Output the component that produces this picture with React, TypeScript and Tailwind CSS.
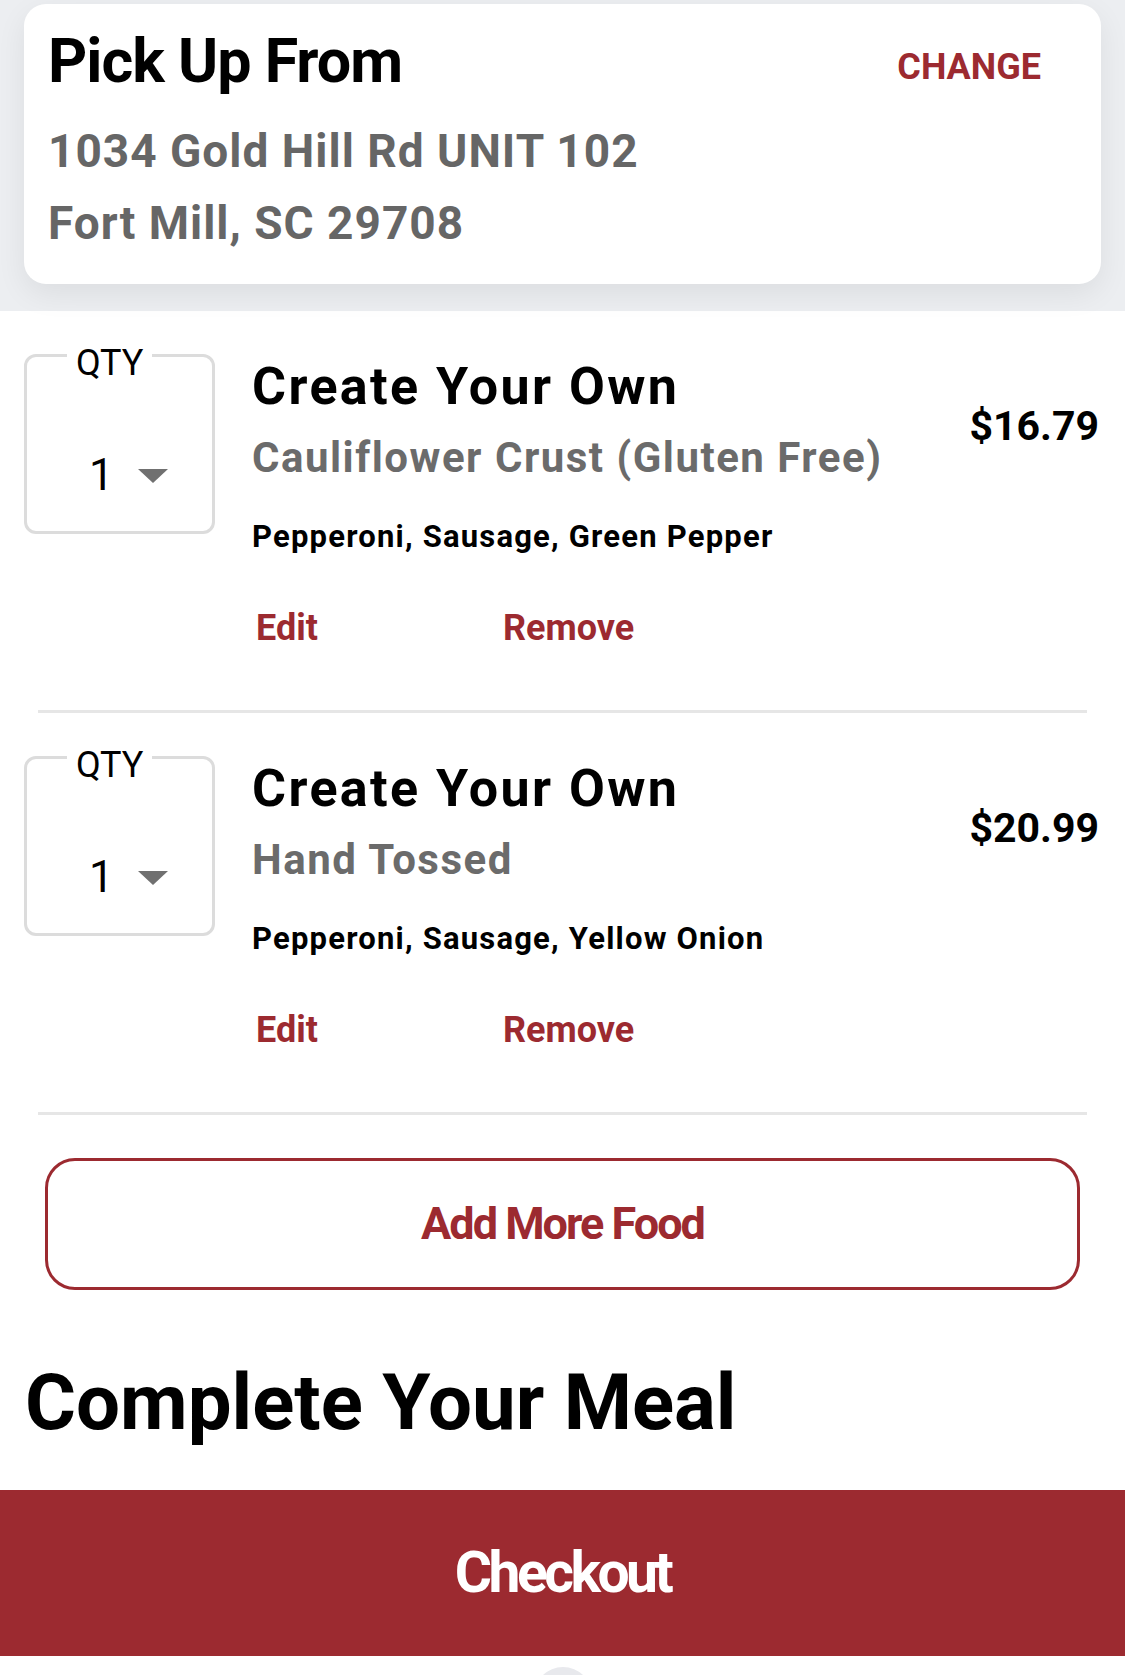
import React from 'react';

type CartItem = {
  id: number;
  name: string;
  crust: string;
  toppings: string;
  price: string;
  qty: number;
};

const CART: CartItem[] = [
  { id: 1, name: 'Create Your Own', crust: 'Cauliflower Crust (Gluten Free)', toppings: 'Pepperoni, Sausage, Green Pepper', price: '$16.79', qty: 1 },
  { id: 2, name: 'Create Your Own', crust: 'Hand Tossed', toppings: 'Pepperoni, Sausage, Yellow Onion', price: '$20.99', qty: 1 },
];

const QtyBox: React.FC<{ qty: number }> = ({ qty }) => (
  <div className="relative w-[191px] h-[180px] shrink-0 border-[3px] border-[#dcdcdc] rounded-[12px]">
    <span className="absolute top-[-12px] left-[40px] bg-white px-[9px] text-[36px] leading-none text-black">QTY</span>
    <div className="flex items-center pt-[96px] pl-[62px] gap-[24px]">
      <span className="text-[44px] leading-none text-black">{qty}</span>
      <svg width="30" height="14" viewBox="0 0 30 14" className="mt-[2px]">
        <path d="M0 0 L30 0 L15 14 Z" fill="#707070" />
      </svg>
    </div>
  </div>
);

const CartRow: React.FC<{ item: CartItem }> = ({ item }) => (
  <div>
    <div className="flex pt-[43px] pb-[64px] pl-[24px] pr-[26px]">
      <QtyBox qty={item.qty} />
      <div className="flex-1 pl-[37px] pt-[7px]">
        <h3 className="text-[52px] leading-none font-bold tracking-[2.4px] text-black">{item.name}</h3>
        <p className="mt-[24px] text-[42px] leading-none font-bold tracking-[1.5px] text-[#6b6b6b]">{item.crust}</p>
        <p className="mt-[42px] text-[31px] leading-none font-bold tracking-[1.2px] text-black">{item.toppings}</p>
        <div className="mt-[58px] flex text-[36px] leading-none font-bold text-[#9c2a30]">
          <button className="w-[251px] pl-[4px] text-left">Edit</button>
          <button className="text-left">Remove</button>
        </div>
      </div>
      <div className="pt-[52px] text-[41px] leading-none font-bold text-black">{item.price}</div>
    </div>
    <div className="mx-[38px] h-[3px] bg-[#e6e6e6]" />
  </div>
);

const App: React.FC = () => {
  return (
    <div className="h-[1675px] overflow-hidden bg-white" style={{ fontFamily: 'Roboto, "Liberation Sans", sans-serif' }}>
      <div className="bg-[#eceef1] px-[24px] pt-[4px] pb-[27px]">
        <div className="bg-white rounded-[22px] shadow-[0_10px_30px_rgba(0,0,0,0.07)] pl-[24px] pr-[60px] pt-[27px] pb-[25px]">
          <div className="flex justify-between items-start">
            <h2 className="text-[61px] leading-none font-bold tracking-[-1px] text-black">Pick Up From</h2>
            <button className="mt-[18px] text-[36px] leading-none font-bold text-[#9c2a30]">CHANGE</button>
          </div>
          <div className="mt-[23px] text-[46px] leading-[72px] font-bold tracking-[1px] text-[#666666]">
            <p>1034 Gold Hill Rd UNIT 102</p>
            <p>Fort Mill, SC 29708</p>
          </div>
        </div>
      </div>

      {CART.map(item => <CartRow key={item.id} item={item} />)}

      <div className="px-[45px] pt-[43px]">
        <button className="w-full h-[132px] border-[3px] border-[#9c2a30] rounded-[30px] text-[45px] font-bold text-[#9c2a30] tracking-[-2px]">
          Add More Food
        </button>
      </div>

      <h2 className="mt-[74px] pl-[25px] text-[78px] leading-none font-bold text-black">Complete Your Meal</h2>

      <button className="mt-[48px] w-full h-[166px] bg-[#9c2a30] text-white text-[57px] font-bold tracking-[-3.5px]">
        Checkout
      </button>

      <div className="mx-auto mt-[11px] w-[58px] h-[58px] rounded-full bg-[#e8e9ed]" />
    </div>
  );
};

export default App;
